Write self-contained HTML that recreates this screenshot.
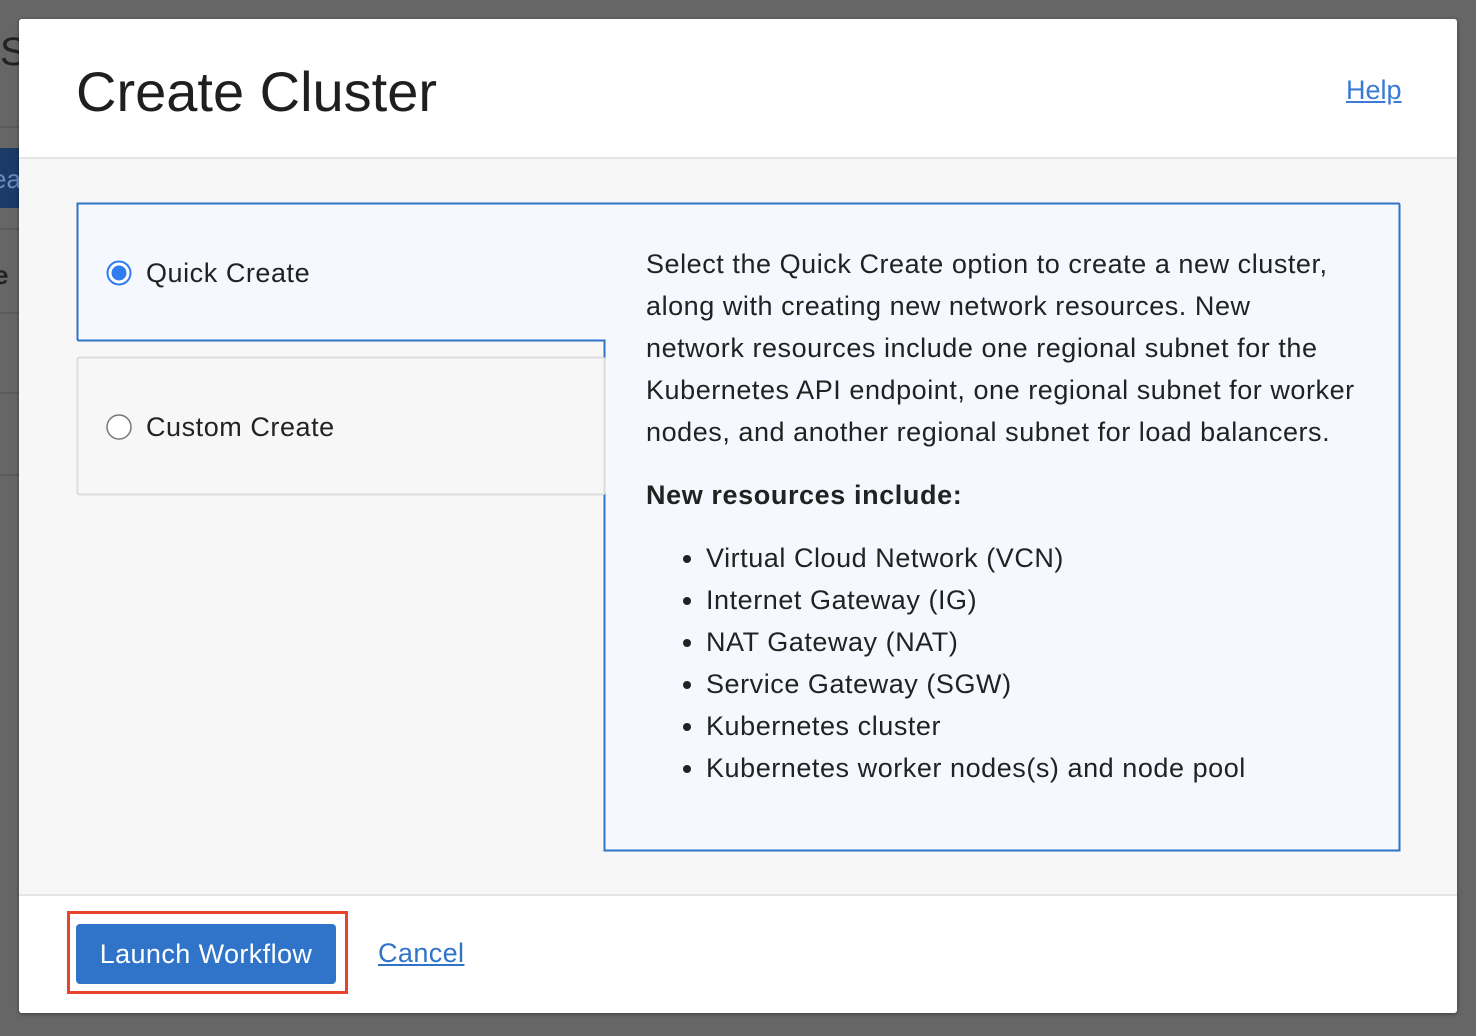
<!DOCTYPE html>
<html><head><meta charset="utf-8"><style>
*{margin:0;padding:0;box-sizing:border-box}
body{width:1476px;height:1036px;background:#666;position:relative;overflow:hidden;font-family:"Liberation Sans",Arial,sans-serif;color:#1f1f1f}
.a{position:absolute}
.line{position:absolute;left:0;width:19px;height:2px;background:#5a5a5a}
.t{font-size:27px;letter-spacing:0.55px;color:#222}
</style></head><body>
<div class="a" style="left:0;top:30px;font-size:40px;color:#222">S</div>
<div class="line" style="top:126px"></div>
<div class="a" style="left:0;top:148px;width:19px;height:60px;background:#1c3a66"></div>
<div class="a" style="left:-8px;top:164px;font-size:26px;color:#6b8cc0">ea</div>
<div class="line" style="top:228px"></div>
<div class="a" style="left:-6px;top:260px;font-size:26px;font-weight:bold;color:#222">e</div>
<div class="line" style="top:312px"></div>
<div class="line" style="top:392px"></div>
<div class="line" style="top:474px"></div>

<div class="a" style="left:19px;top:19px;width:1438px;height:994px;background:#f7f7f7;border-radius:3px;box-shadow:0 1px 4px rgba(0,0,0,.4);overflow:hidden">
  <div class="a" style="left:0;top:0;width:1438px;height:140px;background:#fff;border-bottom:2px solid #e4e4e4"></div>
  <div class="a" style="left:57px;top:40px;font-size:56px;color:#1f1f1f;letter-spacing:0px">Create Cluster</div>
  <div class="a" style="left:1327px;top:56px;font-size:27px;color:#3a7bd5;text-decoration:underline">Help</div>
  <div class="a" style="left:0;top:875px;width:1438px;height:119px;background:#fff;border-top:2px solid #e4e4e4"></div>
</div>

<svg class="a" style="left:0;top:0" width="1476" height="1036">
  <path d="M77.5,203.5 H1398.5 Q1399.5,203.5 1399.5,205 V850.5 H604.5 V340.5 H79 Q77.5,340.5 77.5,339 Z" fill="#f5f9ff" stroke="#2e73c8" stroke-width="2"/>
  <rect x="77.5" y="357.5" width="527" height="137" rx="2" fill="#f7f7f7" stroke="#dcdcdc" stroke-width="2"/>
  <circle cx="119" cy="273" r="11.5" fill="#fff" stroke="#2f7bf0" stroke-width="2"/>
  <circle cx="119" cy="273" r="7.5" fill="#2f7bf0"/>
  <circle cx="119" cy="427" r="12" fill="#fff" stroke="#777" stroke-width="1.5"/>
</svg>
<div class="a t" style="left:146px;top:258px">Quick Create</div>
<div class="a t" style="left:146px;top:412px">Custom Create</div>

<div class="a t" style="left:646px;top:243px;width:760px;line-height:42px;white-space:nowrap">Select the Quick Create option to create a new cluster,<br>along with creating new network resources. New<br>network resources include one regional subnet for the<br>Kubernetes API endpoint, one regional subnet for worker<br>nodes, and another regional subnet for load balancers.</div>
<div class="a t" style="left:646px;top:480px;font-weight:bold;letter-spacing:0.6px">New resources include:</div>
<ul class="a t" style="left:706px;top:537px;line-height:42px;padding-left:0;white-space:nowrap">
<li>Virtual Cloud Network (VCN)</li>
<li>Internet Gateway (IG)</li>
<li>NAT Gateway (NAT)</li>
<li>Service Gateway (SGW)</li>
<li>Kubernetes cluster</li>
<li>Kubernetes worker nodes(s) and node pool</li>
</ul>

<div class="a" style="left:67px;top:911px;width:281px;height:83px;border:3px solid #e8432b"></div>
<div class="a" style="left:76px;top:924px;width:260px;height:60px;background:#2f74c9;border-radius:4px;color:#fff;font-size:27px;letter-spacing:0.4px;line-height:60px;text-align:center">Launch Workflow</div>
<div class="a" style="left:378px;top:938px;font-size:27px;letter-spacing:0.4px;color:#2f74c9;text-decoration:underline">Cancel</div>
</body></html>
